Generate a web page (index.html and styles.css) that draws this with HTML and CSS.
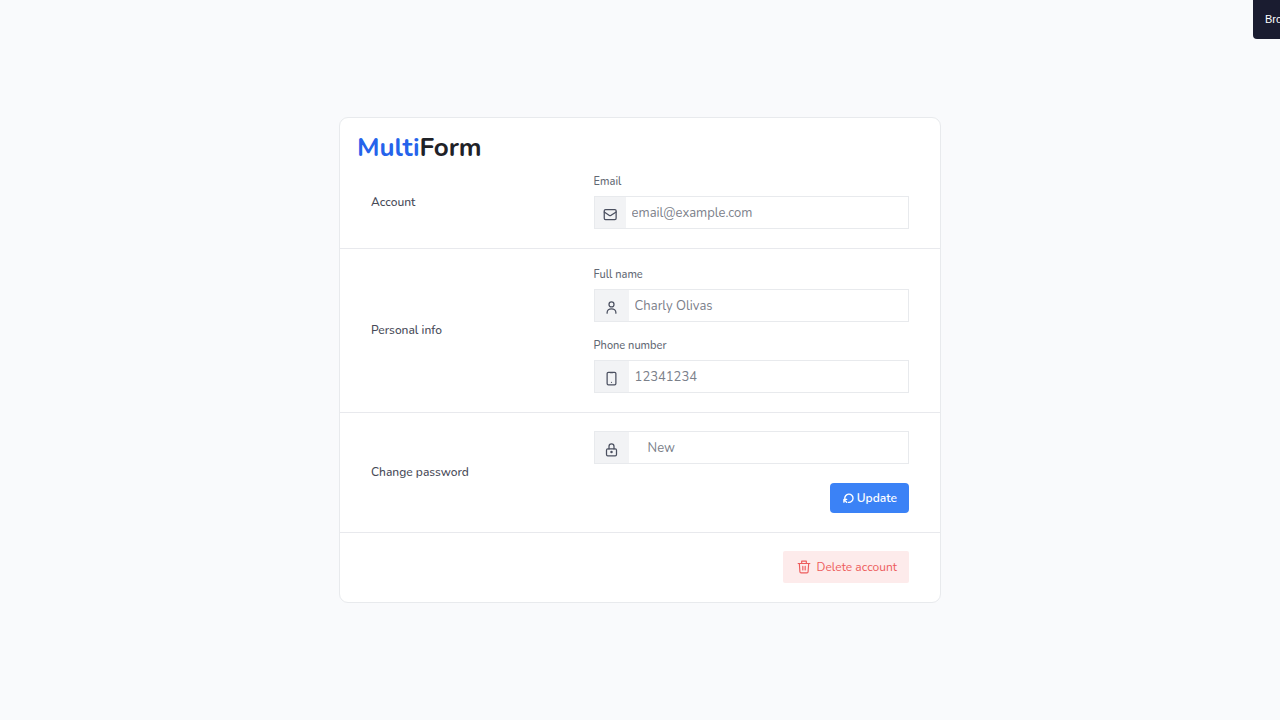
FILE: index.html
```html
<!DOCTYPE html>
<html lang="en">
<head>
<meta charset="utf-8">
<meta name="viewport" content="width=device-width, initial-scale=1">
<title>MultiForm</title>
<link rel="stylesheet" href="styles.css">
</head>
<body>
<button class="browse" type="button">Bro</button>
<main class="page">
  <form class="card">
    <h1 class="title"><span class="title-accent">Multi</span>Form</h1>
    <section class="section section-first">
      <h2 class="section-name">Account</h2>
      <div class="fields">
        <div class="field">
          <label class="label" for="email">Email</label>
          <div class="control">
            <span class="addon addon-narrow"><svg class="icon" viewBox="0 0 24 24"><rect x="2" y="4" width="19" height="16" rx="2"/><path d="M2 8l8.200 5.500a2 2 0 0 0 2.200 0L21 8"/></svg></span>
            <input class="input" id="email" type="email" placeholder="email@example.com">
          </div>
        </div>
      </div>
    </section>
    <section class="section">
      <h2 class="section-name">Personal info</h2>
      <div class="fields">
        <div class="field">
          <label class="label" for="name">Full name</label>
          <div class="control">
            <span class="addon"><svg class="icon" viewBox="0 0 24 24"><circle cx="12" cy="7" r="4"/><path d="M5 21v-1a7 6 0 0 1 14 0v1"/></svg></span>
            <input class="input" id="name" type="text" placeholder="Charly Olivas">
          </div>
        </div>
        <div class="field">
          <label class="label" for="phone">Phone number</label>
          <div class="control">
            <span class="addon"><svg class="icon" viewBox="0 0 24 24"><rect x="5" y="2" width="14" height="20" rx="2"/><path d="M12 18h.01M10 2.500h4"/></svg></span>
            <input class="input" id="phone" type="tel" placeholder="12341234">
          </div>
        </div>
      </div>
    </section>
    <section class="section">
      <h2 class="section-name">Change password</h2>
      <div class="fields fields-action">
        <div class="control">
          <span class="addon"><svg class="icon" viewBox="0 0 24 24"><rect x="4" y="11" width="16" height="11" rx="2"/><path d="M8 11V7a4 4 0 0 1 8 0v4"/><circle cx="12" cy="16" r="1"/></svg></span>
          <input class="input input-inset" type="password" placeholder="New" aria-label="New password">
        </div>
        <button class="button button-primary" type="submit"><svg class="icon icon-small" viewBox="0 0 24 24"><path d="M4 13a9 9 0 1 1 8 7.500M2 20v-6h6M3 15l5 5"/></svg>Update</button>
      </div>
    </section>
    <section class="section section-last">
      <button class="button button-danger" type="button"><svg class="icon icon-trash" viewBox="0 0 24 24"><path d="M2 6h20M8 6V2h8v4M4 6l1 14a2 2 0 0 0 2 2h10a2 2 0 0 0 2-2l1-14M10 11v6M14 11v6"/></svg>Delete account</button>
    </section>
  </form>
</main>
</body>
</html>
```
FILE: styles.css
```css
* {
  box-sizing: border-box;
}

body {
  margin: 0;
  overflow-x: hidden;
  background: #f9fafc;
  color: #4b5563;
  font-family: Nunito, "Noto Sans", sans-serif;
  font-size: 12px;
  line-height: 16px;
}

.page {
  display: flex;
  align-items: center;
  justify-content: center;
  min-height: 100vh;
}

.card {
  width: 100%;
  max-width: 602px;
  border: 1px solid #e8eaed;
  border-radius: 9px;
  background: #fff;
}

.title {
  margin: 0;
  padding: 12px 17px 8px;
  color: #1f2228;
  font-size: 26px;
  font-weight: 700;
  line-height: 36px;
}

.title-accent {
  color: #2563eb;
}

.section {
  display: grid;
  grid-template-columns: 12fr 17fr;
  align-items: center;
  padding: 18px 31px 19px;
  border-bottom: 1px solid #e8e9ed;
}

.section-first {
  padding-top: 0;
}

.section-last {
  display: flex;
  justify-content: flex-end;
  border-bottom: 0;
}

.section-name {
  margin: 0;
  color: #474a57;
  font-size: 12px;
  font-weight: 500;
}

.fields {
  display: flex;
  flex-direction: column;
  gap: 16px;
}

.fields-action {
  gap: 19px;
}

.label {
  display: block;
  margin-bottom: 6px;
  color: #626873;
  font-size: 11px;
  font-weight: 500;
}

.control {
  display: flex;
  width: 100%;
  height: 33px;
  border: 1px solid #e8eaed;
  background: #fff;
}

.addon {
  display: flex;
  flex: none;
  align-items: center;
  justify-content: center;
  width: 34px;
  padding-top: 3px;
  background: #f2f3f5;
  color: #4b5060;
}

.addon-narrow {
  width: 31px;
}

.input {
  flex: 1;
  min-width: 0;
  padding: 0 6px;
  border: 0;
  background: transparent;
  color: #374151;
  font: inherit;
  font-size: 13px;
}

.input-inset {
  padding-left: 19px;
}

.input::placeholder {
  color: #7b808a;
  opacity: 1;
}

.icon {
  flex: none;
  width: 15px;
  height: 15px;
  fill: none;
  stroke: currentColor;
  stroke-width: 2;
  stroke-linecap: round;
  stroke-linejoin: round;
}

.icon-small {
  width: 11px;
  height: 11px;
  stroke-width: 3;
}

.icon-trash {
  width: 14px;
  height: 14px;
}

.button {
  display: flex;
  align-items: center;
  align-self: flex-end;
  padding: 0 12px;
  border: 0;
  border-radius: 4px;
  font: inherit;
}

.button-primary {
  gap: 3px;
  height: 30px;
  padding: 0 12px 0 13px;
  background: #3b82f6;
  color: #fff;
  font-weight: 600;
}

.button-danger {
  gap: 6px;
  height: 32px;
  padding: 0 12px 0 14px;
  border-radius: 2px;
  background: #fdebeb;
  color: #ed5c5c;
}

.browse {
  position: absolute;
  top: 0;
  right: 0;
  width: 27px;
  height: 39px;
  padding: 0 0 2px 12px;
  overflow: hidden;
  border: 0;
  border-radius: 0 0 0 4px;
  background: #1a1c30;
  color: #fff;
  font-family: "Liberation Sans", Arial, sans-serif;
  font-size: 11px;
  text-align: left;
  white-space: nowrap;
}
```
